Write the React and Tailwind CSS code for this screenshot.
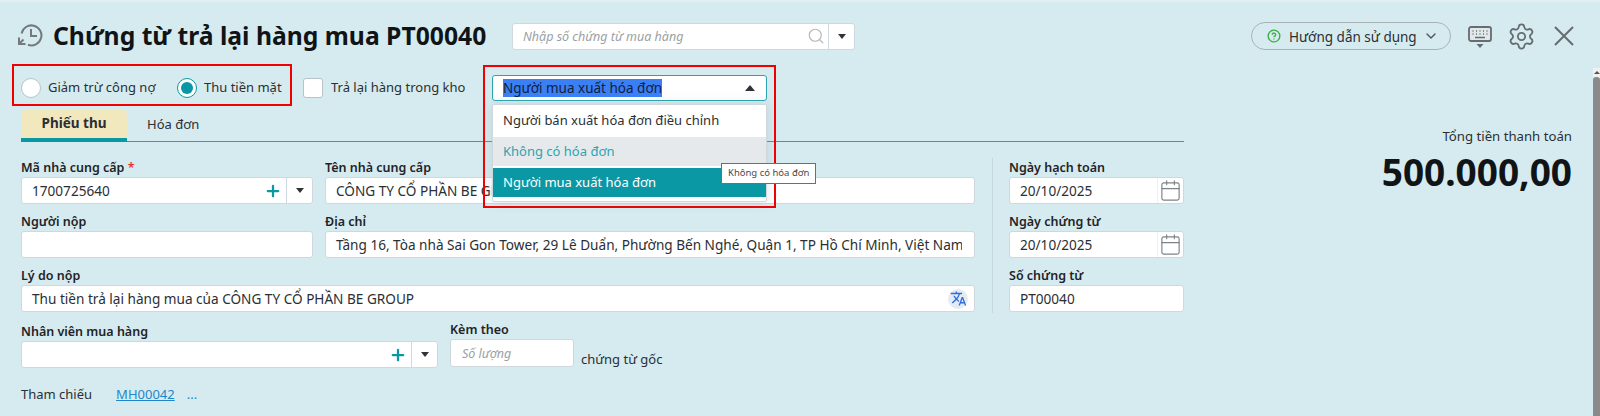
import { Calendar, ChevronDown, CircleHelp, Plus, Search, Settings } from "lucide-react";
import { MdTranslate } from "react-icons/md";

const inputBox = "h-[27px] pt-[2px] bg-white border border-[#cfd8dc] rounded-[3px] flex items-center text-[13.6px] text-[#2b2f33]";

const Caret = ({ up }) => (
  <span
    className={
      up
        ? "w-0 h-0 border-x-[5px] border-x-transparent border-b-[6px] border-b-[#30343a]"
        : "w-0 h-0 border-x-[4px] border-x-transparent border-t-[5px] border-t-[#30343a]"
    }
  />
);

const Label = ({ children }) => (
  <div className="h-[19px] text-[12.5px] leading-[20px] font-semibold text-[#1f2327] whitespace-nowrap">{children}</div>
);

const ComboField = ({ value }) => (
  <div className={inputBox}>
    <span className="flex-1 pl-[10px]">{value}</span>
    <Plus className="w-[18px] h-[18px] -mt-[2px] text-[#0b98a5] mr-[4px]" strokeWidth={3} />
    <span className="w-[26px] h-[25px] -mt-[2px] border-l border-[#cfd8dc] flex items-center justify-center">
      <Caret />
    </span>
  </div>
);

const DateField = ({ value }) => (
  <div className={inputBox}>
    <span className="flex-1 pl-[10px]">{value}</span>
    <span className="w-[26px] h-[25px] -mt-[2px] border-l border-[#eef1f2] flex items-center justify-center">
      <Calendar className="w-[23px] h-[23px] text-[#7b8387]" strokeWidth={1.2} />
    </span>
  </div>
);

const HistoryIcon = () => (
  <svg viewBox="0 0 26 24" className="w-[26px] h-[24px] text-[#73797d]" fill="none" stroke="currentColor" strokeWidth="2">
    <path d="M4.6 9.5A10 10 0 1 1 11 20.8" />
    <path d="M14 5v7h6" />
    <path d="M2 13.5v6.5h6.5M2.5 19.5l4-4" />
  </svg>
);

const KeyboardIcon = () => (
  <svg viewBox="0 0 24 24" className="w-[24px] h-[24px] mt-[4px] text-[#666c70]" fill="none" stroke="currentColor" strokeWidth="1.8">
    <rect x="1" y="1" width="22" height="14" rx="2" fill="#e2e8ea" />
    <path d="M4.5 5h1M8 5h1M11.5 5h1M15 5h1M18.5 5h1M4.5 8h1M8 8h1M11.5 8h1M15 8h1M18.5 8h1M7 11.5h10" strokeWidth="1.5" />
    <path d="M8.5 18h7l-3.5 4z" fill="currentColor" stroke="none" />
  </svg>
);

const CloseIcon = () => (
  <svg viewBox="0 0 20 20" className="w-[20px] h-[20px] text-[#666c70]" fill="none" stroke="currentColor" strokeWidth="2">
    <path d="M1 1l18 18M19 1L1 19" />
  </svg>
);

export default function App() {
  return (
    <div
      className="relative w-[1600px] h-[416px] overflow-hidden bg-[#d6ebef] border-t-2 border-[#e3eef0] pt-[21px] text-[#2b2f33]"
      style={{ fontFamily: '"Noto Sans", sans-serif' }}
    >
      {/* Header */}
      <div className="h-[26px] flex items-center pl-[17px] pr-[26px]">
        <HistoryIcon />
        <h1 className="ml-[10px] w-[459px] text-[24.7px] leading-[26px] font-bold text-[#111417] whitespace-nowrap">
          Chứng từ trả lại hàng mua PT00040
        </h1>
        <div className="w-[343px] h-[27px] bg-white border border-[#cfd8dc] rounded-[3px] flex items-center text-[12.5px]">
          <span className="flex-1 pl-[10px] pt-[3px] italic text-[#9a9fa3]">Nhập số chứng từ mua hàng</span>
          <Search className="w-[18px] h-[18px] text-[#b5babd] mr-[3px]" strokeWidth={1.6} />
          <span className="w-[26px] h-full border-l border-[#cfd8dc] flex items-center justify-center">
            <Caret />
          </span>
        </div>
        <div className="ml-auto w-[200px] h-[28px] border border-[#a9b3b6] rounded-full flex items-center pl-[15px] gap-[8px] text-[13.5px] mr-[17px]">
          <CircleHelp className="w-[14px] h-[14px] text-[#3fae49]" strokeWidth={2.4} />
          <span className="pt-[2px] whitespace-nowrap">Hướng dẫn sử dụng</span>
          <ChevronDown className="w-[16px] h-[16px] text-[#4d5357] -ml-[2px]" strokeWidth={2} />
        </div>
        <KeyboardIcon />
        <Settings className="ml-[15px] w-[29px] h-[29px] text-[#666c70]" strokeWidth={1.5} />
        <span className="ml-[18px]">
          <CloseIcon />
        </span>
      </div>

      {/* Options row */}
      <div className="mt-[15px] ml-[12px] h-[42px] flex items-center text-[13px]">
        <div className="w-[280px] h-[42px] pt-[6px] border-[2px] border-[#f00000] flex items-center pl-[7px] whitespace-nowrap">
          <span className="w-[20px] h-[20px] rounded-full bg-white border border-[#b9c2c6]" />
          <span className="ml-[7px] w-[129px]">Giảm trừ công nợ</span>
          <span className="w-[20px] h-[20px] rounded-full bg-white border border-[#0b98a5] flex items-center justify-center">
            <span className="w-[12px] h-[12px] rounded-full bg-[#0b98a5]" />
          </span>
          <span className="ml-[7px]">Thu tiền mặt</span>
        </div>
        <span className="ml-[11px] mt-[6px] w-[20px] h-[20px] rounded-[3px] bg-white border border-[#b9c2c6]" />
        <span className="ml-[8px] mt-[6px]">Trả lại hàng trong kho</span>
      </div>

      {/* Tabs */}
      <div className="mt-[3px] ml-[21px] w-[1163px] h-[33px] flex border-b border-[#2aa5b0] text-[13px]">
        <div className="w-[106px] h-[33px] bg-[#f2e8bd] border-b-[4px] border-[#0b98a5] rounded-t-[6px] font-bold text-[13.5px] text-[#2b2f33] flex items-center justify-center">
          Phiếu thu
        </div>
        <div className="ml-[20px] h-[32px] flex items-center">Hóa đơn</div>
      </div>

      {/* Form */}
      <div className="flex ml-[21px] mt-[16px]">
        <div className="w-[954px] flex flex-col">
          <div className="grid grid-cols-[292px_minmax(0,1fr)] gap-x-[12px]">
            <div>
              <Label>
                Mã nhà cung cấp <span className="text-[#e5352b]">*</span>
              </Label>
              <ComboField value="1700725640" />
            </div>
            <div>
              <Label>Tên nhà cung cấp</Label>
              <div className={inputBox}>
                <span className="pl-[10px]">CÔNG TY CỔ PHẦN BE GROUP</span>
              </div>
            </div>
            <div className="mt-[8px]">
              <Label>Người nộp</Label>
              <div className={inputBox} />
            </div>
            <div className="mt-[8px]">
              <Label>Địa chỉ</Label>
              <div className={inputBox + " pr-[12px]"}>
                <span className="pl-[10px] whitespace-nowrap overflow-hidden">
                  Tầng 16, Tòa nhà Sai Gon Tower, 29 Lê Duẩn, Phường Bến Nghé, Quận 1, TP Hồ Chí Minh, Việt Nam
                </span>
              </div>
            </div>
          </div>
          <div className="mt-[8px]">
            <Label>Lý do nộp</Label>
            <div className={inputBox}>
              <span className="flex-1 pl-[10px]">Thu tiền trả lại hàng mua của CÔNG TY CỔ PHẦN BE GROUP</span>
              <span className="w-[20px] h-[20px] -mt-[2px] mr-[6px] rounded-full bg-[#e4ebf3] flex items-center justify-center">
                <MdTranslate className="w-[17px] h-[17px] text-[#2f6fdd]" />
              </span>
            </div>
          </div>
          <div className="mt-[10px] flex items-end">
            <div className="w-[417px]">
              <Label>Nhân viên mua hàng</Label>
              <ComboField value="" />
            </div>
            <div className="ml-[12px] w-[124px] -mt-[3px] mb-[1px]">
              <div className="h-[19px] text-[12.5px] leading-[22px] font-semibold text-[#1f2327]">Kèm theo</div>
              <div className={inputBox + " mt-[1px] h-[28px]"}>
                <span className="pl-[11px] italic text-[12.5px] text-[#9a9fa3]">Số lượng</span>
              </div>
            </div>
            <span className="ml-[7px] -mb-[1px] text-[13px]">chứng từ gốc</span>
          </div>
          <div className="mt-[17px] flex items-center text-[13px]">
            <span>Tham chiếu</span>
            <span className="ml-[24px] underline text-[#1f86c9]">MH00042</span>
            <span className="ml-[12px] text-[#1f86c9]">...</span>
          </div>
        </div>

        <div className="ml-[17px] w-px h-[155px] bg-[#c6d8dc]" />

        <div className="ml-[16px] w-[175px]">
          <Label>Ngày hạch toán</Label>
          <DateField value="20/10/2025" />
          <div className="mt-[8px]">
            <Label>Ngày chứng từ</Label>
            <DateField value="20/10/2025" />
          </div>
          <div className="mt-[8px]">
            <Label>Số chứng từ</Label>
            <div className={inputBox}>
              <span className="pl-[10px]">PT00040</span>
            </div>
          </div>
        </div>
      </div>

      {/* Total */}
      <div className="absolute right-[28px] top-[124px] text-right">
        <div className="text-[13.2px] leading-[20px]">Tổng tiền thanh toán</div>
        <div className="mt-[4px] text-[37px] leading-[44px] font-bold text-[#111417]">500.000,00</div>
      </div>

      {/* Invoice select with dropdown */}
      <div className="absolute left-[483px] top-[63px] w-[293px] h-[143px] border-[2px] border-[#f00000] px-[7px] pt-[8px]">
        <div className="h-[26px] bg-white border border-[#2aa5b0] rounded-[3px] flex items-center pl-[10px] pr-[11px] text-[13.5px]">
          <span className="flex-1">
            <span className="bg-[#3b7ff5] text-[#10213f]">Người mua xuất hóa đơn</span>
          </span>
          <Caret up />
        </div>
        <div className="mt-[3px] h-[98px] bg-white border border-[#cfd8dc] rounded-[2px] shadow-[0_0_12px_rgba(120,140,150,0.25)] text-[13px]">
          <div className="h-[32px] pl-[10px] flex items-center">Người bán xuất hóa đơn điều chỉnh</div>
          <div className="h-[29px] pl-[10px] flex items-center bg-[#e6e9ec] text-[#2aa5b0]">Không có hóa đơn</div>
          <div className="mt-[2px] h-[29px] pl-[10px] flex items-center bg-[#0b98a5] text-white">Người mua xuất hóa đơn</div>
        </div>
      </div>

      {/* Tooltip */}
      <div className="absolute left-[721px] top-[161px] h-[21px] px-[6px] bg-white border border-[#6f6f6f] flex items-center text-[9.5px] text-[#4a4a4a] whitespace-nowrap">
        Không có hóa đơn
      </div>

      {/* Scrollbar */}
      <div className="absolute right-0 top-[66px] bottom-0 w-[7px] bg-[#f1f1f1] flex flex-col items-center">
        <span className="mt-[3px] w-0 h-0 border-x-[3px] border-x-transparent border-b-[3px] border-b-[#555]" />
        <div className="mt-[3px] w-full flex-1 bg-[#8a8a8a] rounded-t-[3px]" />
      </div>
    </div>
  );
}
